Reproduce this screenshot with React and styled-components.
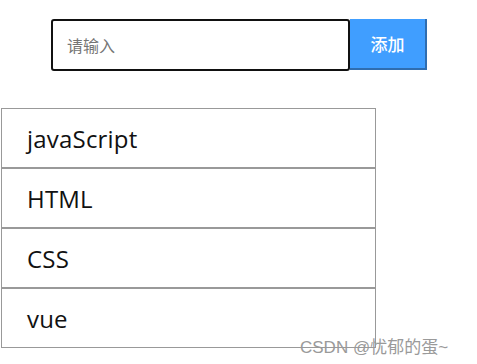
import React, { useState } from 'react'
import styled, { createGlobalStyle } from 'styled-components'

const GlobalStyle = createGlobalStyle`
  body {
    margin: 0;
    background: #fff;
    font-family: "Open Sans", "Noto Sans CJK SC", sans-serif;
  }
`

const App = () => {
  const [items] = useState(['javaScript', 'HTML', 'CSS', 'vue'])
  return (
    <Page>
      <GlobalStyle />
      <AddBar>
        <TextInput placeholder='请输入' />
        <AddButton>添加</AddButton>
      </AddBar>
      <List>
        {items.map(item => (
          <Item key={item}>{item}</Item>
        ))}
      </List>
      <Watermark>CSDN @忧郁的蛋~</Watermark>
    </Page>
  )
}

const Page = styled.div`
  position: relative;
  width: 477px;
  height: 364px;
  padding-top: 19px;
  box-sizing: border-box;
`
const AddBar = styled.div`
  display: flex;
  margin-left: 51px;
  height: 52px;
`
const TextInput = styled.input`
  width: 299px;
  height: 52px;
  box-sizing: border-box;
  border: 2px solid #111;
  border-radius: 3px;
  padding: 0 14px;
  font-size: 16px;
  font-family: "Noto Sans CJK SC", sans-serif;
  outline: none;
  ::placeholder {
    color: #808080;
  }
`
const AddButton = styled.button`
  width: 77px;
  height: 51px;
  box-sizing: border-box;
  border: none;
  border-right: 2px solid #2f6db0;
  border-bottom: 2px solid #2f6db0;
  background-color: #409eff;
  color: #fff;
  font-size: 17px;
  font-weight: 500;
  font-family: "Noto Sans CJK SC", sans-serif;
  padding: 0;
`
const List = styled.ul`
  list-style: none;
  margin: 37px 0 0 1px;
  padding: 0;
  width: 375px;
`
const Item = styled.li`
  height: 60px;
  box-sizing: border-box;
  border: 1px solid #999;
  padding-left: 25px;
  display: flex;
  align-items: center;
  font-size: 24px;
  letter-spacing: 0.2px;
  color: #111;
`
const Watermark = styled.div`
  position: absolute;
  left: 300px;
  top: 333px;
  font-size: 17px;
  color: #9a9a9a;
  font-family: "Liberation Sans", "Noto Sans CJK SC", sans-serif;
`

export default App
